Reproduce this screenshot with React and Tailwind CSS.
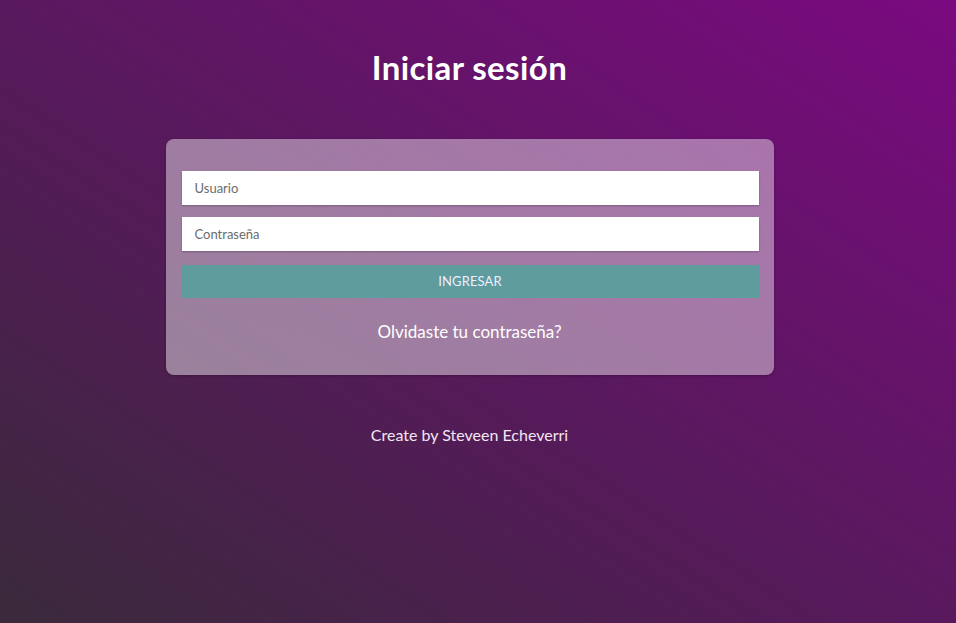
export default function App() {
  return (
    <div
      className="w-[956px] h-[623px] overflow-hidden bg-[linear-gradient(to_top_right,#3a2a3b_0%,#561a5a_45%,#7a0a80_100%)] pr-[17px] flex flex-col items-center text-white"
      style={{ fontFamily: "Lato, 'Noto Sans', sans-serif" }}
    >
      <h1 className="mt-[48px] h-[38px] text-[33px] leading-[38px] font-bold tracking-[0.4px]">Iniciar sesión</h1>
      <div className="mt-[53px] w-[608px] h-[236px] rounded-[8px] bg-[linear-gradient(to_top_right,rgba(255,255,255,0.44),rgba(255,255,255,0.42))] shadow-[0_1px_3px_rgba(0,0,0,0.25)] px-[16px] pt-[32px] flex flex-col">
        <input
          placeholder="Usuario"
          className="w-[577px] h-[34px] bg-white px-[13px] text-[13px] text-gray-800 placeholder:text-[#6b6b6b] outline-none shadow-[0_1px_2px_rgba(0,0,0,0.25)]"
        />
        <input
          placeholder="Contraseña"
          type="password"
          className="mt-[12px] w-[577px] h-[34px] bg-white px-[13px] text-[13px] text-gray-800 placeholder:text-[#6b6b6b] outline-none shadow-[0_1px_2px_rgba(0,0,0,0.25)]"
        />
        <button className="mt-[14px] w-[577px] h-[33px] bg-[#5e9c9e] text-[13px] text-[#eef] tracking-[0.1px]">
          INGRESAR
        </button>
        <p className="mt-[22px] text-center text-[17px] leading-[24px] text-white">Olvidaste tu contraseña?</p>
      </div>
      <p className="mt-[49px] text-[16px] leading-[22px] text-[#f2e6f2]">Create by Steveen Echeverri</p>
    </div>
  );
}
